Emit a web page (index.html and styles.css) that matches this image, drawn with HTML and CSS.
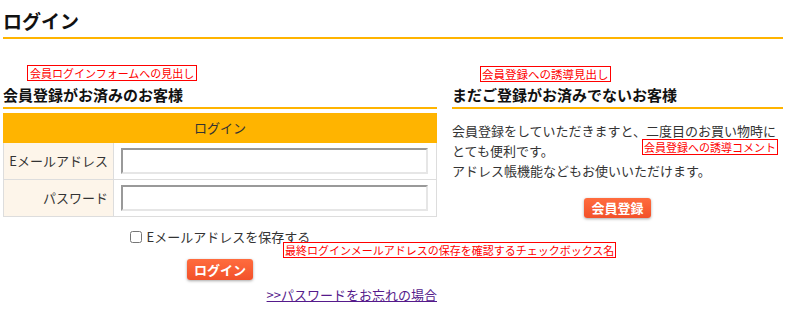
FILE: index.html
```html
<!DOCTYPE html>
<html lang="ja">
<head>
    <meta charset="UTF-8">
    <title>ログイン</title>
    <link rel="stylesheet" href="styles.css">
</head>
<body>
<div class="page">
    <h1 class="title">ログイン</h1>

    <div class="cols">
        <!-- 会員ログイン -->
        <div class="col col-left">
            <h2 class="head">会員登録がお済みのお客様
                <span class="tip tip-login">会員ログインフォームへの見出し</span>
            </h2>
            <table class="login-table">
                <thead>
                    <tr><th colspan="2">ログイン</th></tr>
                </thead>
                <tbody>
                    <tr>
                        <td class="label">Eメールアドレス</td>
                        <td class="value"><input type="text" class="field"></td>
                    </tr>
                    <tr>
                        <td class="label">パスワード</td>
                        <td class="value"><input type="password" class="field"></td>
                    </tr>
                </tbody>
            </table>
            <div class="remember">
                <label><input type="checkbox" class="check"> Eメールアドレスを保存する</label>
                <span class="tip tip-check">最終ログインメールアドレスの保存を確認するチェックボックス名</span>
            </div>
            <div class="btn-row">
                <button class="btn">ログイン</button>
            </div>
            <div class="forgot">
                <a href="#">&gt;&gt;パスワードをお忘れの場合</a>
            </div>
        </div>

        <!-- 新規会員登録 -->
        <div class="col col-right">
            <h2 class="head">まだご登録がお済みでないお客様
                <span class="tip tip-entry">会員登録への誘導見出し</span>
            </h2>
            <p class="intro">会員登録をしていただきますと、二度目のお買い物時にとても便利です。<br>アドレス帳機能などもお使いいただけます。
                <span class="tip tip-comment">会員登録への誘導コメント</span>
            </p>
            <div class="btn-row">
                <button class="btn">会員登録</button>
            </div>
        </div>
    </div>
</div>
</body>
</html>
```

FILE: styles.css
```css
body {
    margin: 0;
    font-family: "Noto Sans CJK JP", "Noto Sans", sans-serif;
    color: #333;
    background-color: #fff;
}
.page {
    padding: 0 3px;
}
.title {
    margin: 0;
    padding: 7px 0 2px;
    font-size: 19px;
    line-height: 28px;
    color: #111;
    border-bottom: 2px solid #ffb400;
}
.cols {
    display: flex;
    gap: 15px;
    margin-top: 46px;
}
.col {
    position: relative;
}
.col-left {
    width: 434px;
}
.col-right {
    flex: 1;
}
.head {
    position: relative;
    margin: 0;
    padding-bottom: 2px;
    font-size: 15px;
    line-height: 20px;
    color: #111;
    border-bottom: 2px solid #ffb400;
}
.tip {
    position: absolute;
    z-index: 2;
    white-space: nowrap;
    font-size: 11px;
    font-weight: normal;
    line-height: 14px;
    padding: 0 1px;
    color: #f00;
    background-color: #fff;
    border: 1px solid #f00;
}
.tip-login {
    left: 24px;
    top: -20px;
    padding: 0 2px;
}
.tip-entry {
    left: 28px;
    top: -19px;
    font-size: 11.5px;
}
.tip-comment {
    left: 190px;
    top: 18px;
}
.tip-check {
    left: 280px;
    top: 15px;
}
.login-table {
    width: 100%;
    margin-top: 4px;
    border-collapse: collapse;
    font-size: 13px;
    line-height: 18px;
}
.login-table th {
    height: 29px;
    box-sizing: border-box;
    padding: 0;
    font-weight: normal;
    background-color: #ffb400;
    border: 1px solid #ffb400;
}
.login-table td {
    border: 1px solid #ddd;
    padding: 5px 8px 5px 7px;
}
.login-table .label {
    width: 110px;
    box-sizing: border-box;
    padding-left: 0;
    padding-right: 5px;
    text-align: right;
    background-color: #fdf5ea;
}
.field {
    display: block;
    box-sizing: border-box;
    width: 100%;
    height: 26px;
    margin: 0;
    border-style: solid;
    border-width: 2px;
    border-color: #999 #e6e6e6 #e6e6e6 #999;
    background-color: #fff;
}
.remember {
    position: relative;
    margin-top: 10px;
    font-size: 13px;
    line-height: 20px;
    text-align: center;
}
.check {
    width: 12px;
    height: 12px;
    margin: 0 2px 0 0;
    vertical-align: -1px;
}
.btn-row {
    text-align: center;
}
.col-left .btn-row {
    margin-top: 9px;
}
.btn {
    padding: 0 7px;
    font-family: inherit;
    font-size: 13px;
    font-weight: bold;
    line-height: 21px;
    color: #fff;
    background: linear-gradient(#ff6c3e, #f2512a);
    border: none;
    border-radius: 3px;
    box-shadow: 0 1px 3px rgba(0, 0, 0, 0.35);
}
.forgot {
    margin-top: 5px;
    font-size: 13px;
    line-height: 20px;
    text-align: right;
}
.forgot a {
    color: #551a8b;
    text-decoration: underline;
}
.intro {
    position: relative;
    margin: 12px 0 0;
    font-size: 13px;
    line-height: 20px;
}
.col-right .btn-row {
    margin-top: 13px;
}
.col-right .btn {
    line-height: 20px;
}
```
